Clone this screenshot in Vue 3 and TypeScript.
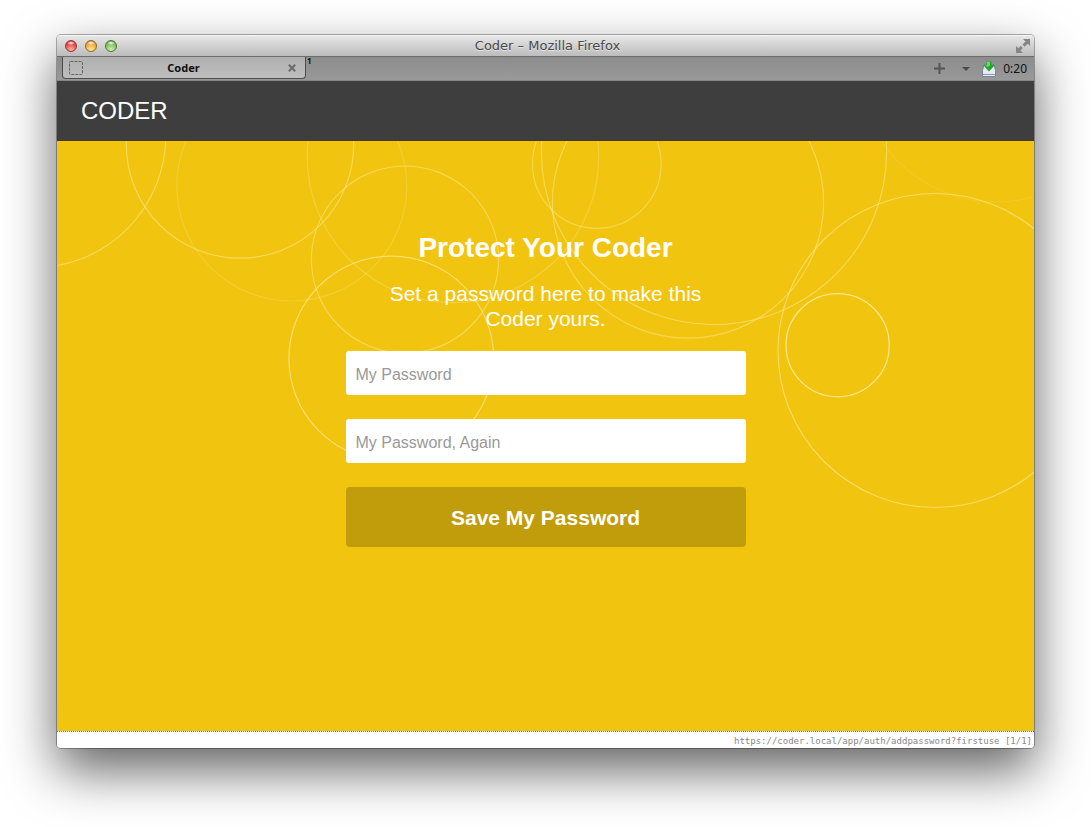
<script setup lang="ts">
import { ref } from 'vue'

interface Ring {
  x: number
  y: number
  r: number
  o: number
}

const rings: Ring[] = [
  { x: -23.5, y: -5.5, r: 132.3, o: 0.4 },
  { x: 183, y: 3.5, r: 113.7, o: 0.42 },
  { x: 234.8, y: 45, r: 115, o: 0.2 },
  { x: 396, y: 16, r: 145.7, o: 0.24 },
  { x: 348, y: 118.6, r: 93.6, o: 0.38 },
  { x: 334.3, y: 217.5, r: 102.4, o: 0.52 },
  { x: 539.8, y: 23, r: 64.3, o: 0.34 },
  { x: 631, y: 61.5, r: 135.6, o: 0.38 },
  { x: 657, y: 11, r: 172.6, o: 0.38 },
  { x: 878, y: 209.5, r: 157, o: 0.46 },
  { x: 780.6, y: 204.2, r: 51.6, o: 0.7 },
  { x: 939, y: -77.5, r: 138.5, o: 0.12 },
]

const lights = ['red', 'amber', 'green']
const password = ref('')
const confirmation = ref('')
</script>

<template>
  <div class="desktop">
    <div class="window">
      <div class="titlebar">
        <div class="lights">
          <button v-for="c in lights" :key="c" type="button" class="light" :class="c" :aria-label="c"></button>
        </div>
        <div class="title">Coder – Mozilla Firefox</div>
        <button type="button" class="icon-btn expand" aria-label="Full screen">
          <svg width="14" height="14" viewBox="0 0 14 14" fill="#858585">
            <path d="M7 0h7v7l-2.300-2.300-3 3-2.200-2.200 3-3z" />
            <path d="M0 7l2.300 2.300 2.400-2.400 2.200 2.200-2.400 2.400L7 14H0z" />
          </svg>
        </button>
      </div>

      <div class="tabbar">
        <div class="tab">
          <svg width="14" height="14" viewBox="0 0 14 14" fill="none" stroke="#666" stroke-dasharray="3 1">
            <rect x=".5" y=".5" width="13" height="13" rx="1" />
          </svg>
          <span class="tab-name">Coder</span>
          <button type="button" class="icon-btn" aria-label="Close tab">
            <svg width="8" height="8" viewBox="0 0 8 8" stroke="#6a6a6a" stroke-width="2" fill="none">
              <path d="M.8.8l6.400 6.400M7.200.8L.8 7.200" />
            </svg>
          </button>
        </div>
        <span class="count">1</span>
        <div class="tools">
          <button type="button" class="icon-btn" aria-label="New tab">
            <svg width="11" height="11" viewBox="0 0 11 11" fill="#555">
              <path d="M4.500 0h2v4.500H11v2H6.500V11h-2V6.500H0v-2h4.500z" />
            </svg>
          </button>
          <button type="button" class="icon-btn caret" aria-label="List all tabs">
            <svg width="8" height="4" viewBox="0 0 8 4" fill="#4b4b4b"><path d="M0 0h8L4 4z" /></svg>
          </button>
          <button type="button" class="icon-btn" aria-label="Downloads">
            <svg width="14" height="16" viewBox="0 0 14 16">
              <path d="M2 3.500h10l1.500 6v6H.5v-6z" fill="#e6eaf4" stroke="#7c8499" />
              <path d="M1 13.500h12" stroke="#8f98b0" />
              <path d="M4.500.5h5V4H13l-6 6.500L1 4h3.500z" fill="#22a82a" />
              <path d="M5 1h3v3.500L5 6 3 4.500h2z" fill="#6fd968" />
            </svg>
          </button>
          <span class="clock">0:20</span>
        </div>
      </div>

      <header class="header">CODER</header>

      <main class="hero">
        <svg class="rings" fill="none" stroke="#fff6c8" stroke-width="1.2" aria-hidden="true">
          <circle v-for="(c, i) in rings" :key="i" :cx="c.x" :cy="c.y" :r="c.r" :stroke-opacity="c.o" />
        </svg>
        <form class="form" @submit.prevent>
          <h1>Protect Your Coder</h1>
          <p>Set a password here to make this Coder yours.</p>
          <input v-model="password" type="password" placeholder="My Password" aria-label="My Password" />
          <input v-model="confirmation" type="password" placeholder="My Password, Again" aria-label="My Password, Again" />
          <button type="submit" class="save">Save My Password</button>
        </form>
      </main>

      <footer class="status">https://coder.local/app/auth/addpassword?firstuse [1/1]</footer>
    </div>
  </div>
</template>

<style>
body {
  margin: 0;
  background: #fff;
}
</style>

<style scoped>
* {
  box-sizing: border-box;
}
.desktop {
  display: flex;
  min-height: 100vh;
  padding: 35px 57px 79px;
  overflow: hidden;
  font-family: "Liberation Sans", Arial, sans-serif;
}
.window {
  flex: 1;
  display: flex;
  flex-direction: column;
  min-width: 0;
  overflow: hidden;
  border-radius: 4px;
  background: #fff;
  box-shadow: 0 0 0 1px rgba(0, 0, 0, 0.3), 0 22px 52px rgba(0, 0, 0, 0.62);
}
.icon-btn {
  display: flex;
  padding: 0;
  border: 0;
  background: none;
}
.titlebar {
  display: grid;
  grid-template-columns: 1fr auto 1fr;
  align-items: center;
  height: 22px;
  padding: 0 4px 0 8px;
  border-top: 1px solid #f6f6f6;
  border-bottom: 1px solid #6c6c6c;
  background: linear-gradient(#e6e6e6, #bcbcbc);
}
.lights {
  display: flex;
  gap: 8px;
}
.light {
  width: 12px;
  height: 12px;
  padding: 0;
  border: 1px solid;
  border-radius: 50%;
}
.red {
  border-color: #8f3b3b;
  background: radial-gradient(ellipse 4px 2px at 50% 20%, #fff, transparent), radial-gradient(circle at 50% 90%, #ffb0a8, #e23c3a 70%, #b52a2a);
}
.amber {
  border-color: #94662a;
  background: radial-gradient(ellipse 4px 2px at 50% 20%, #fff, transparent), radial-gradient(circle at 50% 90%, #ffeb98, #eaa034 70%, #b97420);
}
.green {
  border-color: #4b7838;
  background: radial-gradient(ellipse 4px 2px at 50% 20%, #fff, transparent), radial-gradient(circle at 50% 90%, #d4f6ac, #74b854 70%, #4c8a38);
}
.title {
  color: #4a4a4a;
  font: 13px/20px "DejaVu Sans", sans-serif;
  text-shadow: 0 1px 0 rgba(255, 255, 255, 0.5);
}
.expand {
  justify-self: end;
}
.tabbar {
  display: flex;
  height: 24px;
  padding: 0 7px 0 5px;
  border-bottom: 1px solid #858585;
  background: linear-gradient(#8c8c8c, #999);
  color: #111;
  font: 12px/16px "Noto Sans", sans-serif;
}
.tab {
  display: flex;
  align-items: center;
  width: 244px;
  height: 22px;
  padding: 0 9px 0 6px;
  border: 1px solid #4c4c4c;
  border-top: 0;
  border-radius: 0 0 4px 4px;
  background: linear-gradient(#b0b0b0, #bebebe);
}
.tab-name {
  flex: 1;
  padding-right: 4px;
  font-size: 11px;
  font-weight: 700;
  text-align: center;
}
.count {
  padding-left: 1px;
  font-size: 8px;
  font-weight: 700;
  line-height: 8px;
}
.tools {
  display: flex;
  align-items: center;
  margin-left: auto;
}
.caret {
  margin: 0 12px 0 17px;
}
.clock {
  padding-left: 7px;
}
.header {
  height: 60px;
  padding: 0 24px;
  border-bottom: 1px solid #473a1c;
  background: #3e3e3e;
  color: #fff;
  font-size: 24px;
  line-height: 60px;
}
.hero {
  position: relative;
  flex: 1;
  padding: 91px 24px 24px;
  background: #f1c40f;
}
.rings {
  position: absolute;
  inset: 0;
  width: 100%;
  height: 100%;
}
.form {
  position: relative;
  display: flex;
  flex-direction: column;
  gap: 24px;
  width: 100%;
  max-width: 400px;
  margin: 0 auto;
  color: #fff;
  text-align: center;
}
h1 {
  margin: 0 0 -7px;
  font-size: 28px;
  line-height: 32px;
}
p {
  margin: 0 0 -4px;
  padding: 0 40px;
  font-size: 21px;
  line-height: 25px;
}
input {
  width: 100%;
  height: 44px;
  padding: 3px 10px 0;
  border: 0;
  border-radius: 3px;
  background: #fff;
  color: #333;
  font: 16px "Liberation Sans", Arial, sans-serif;
}
input::placeholder {
  color: #999;
  opacity: 1;
}
.save {
  height: 60px;
  padding: 2px 0 0;
  border: 0;
  border-radius: 4px;
  background: #c19d0c;
  color: #fff;
  font: 700 21px "Liberation Sans", Arial, sans-serif;
}
.status {
  height: 17px;
  padding: 1px 2px 0;
  border-top: 1px dotted #8a7a3a;
  background: #fff;
  color: #888;
  font: 9px/16px "DejaVu Sans Mono", monospace;
  text-align: right;
}
</style>
